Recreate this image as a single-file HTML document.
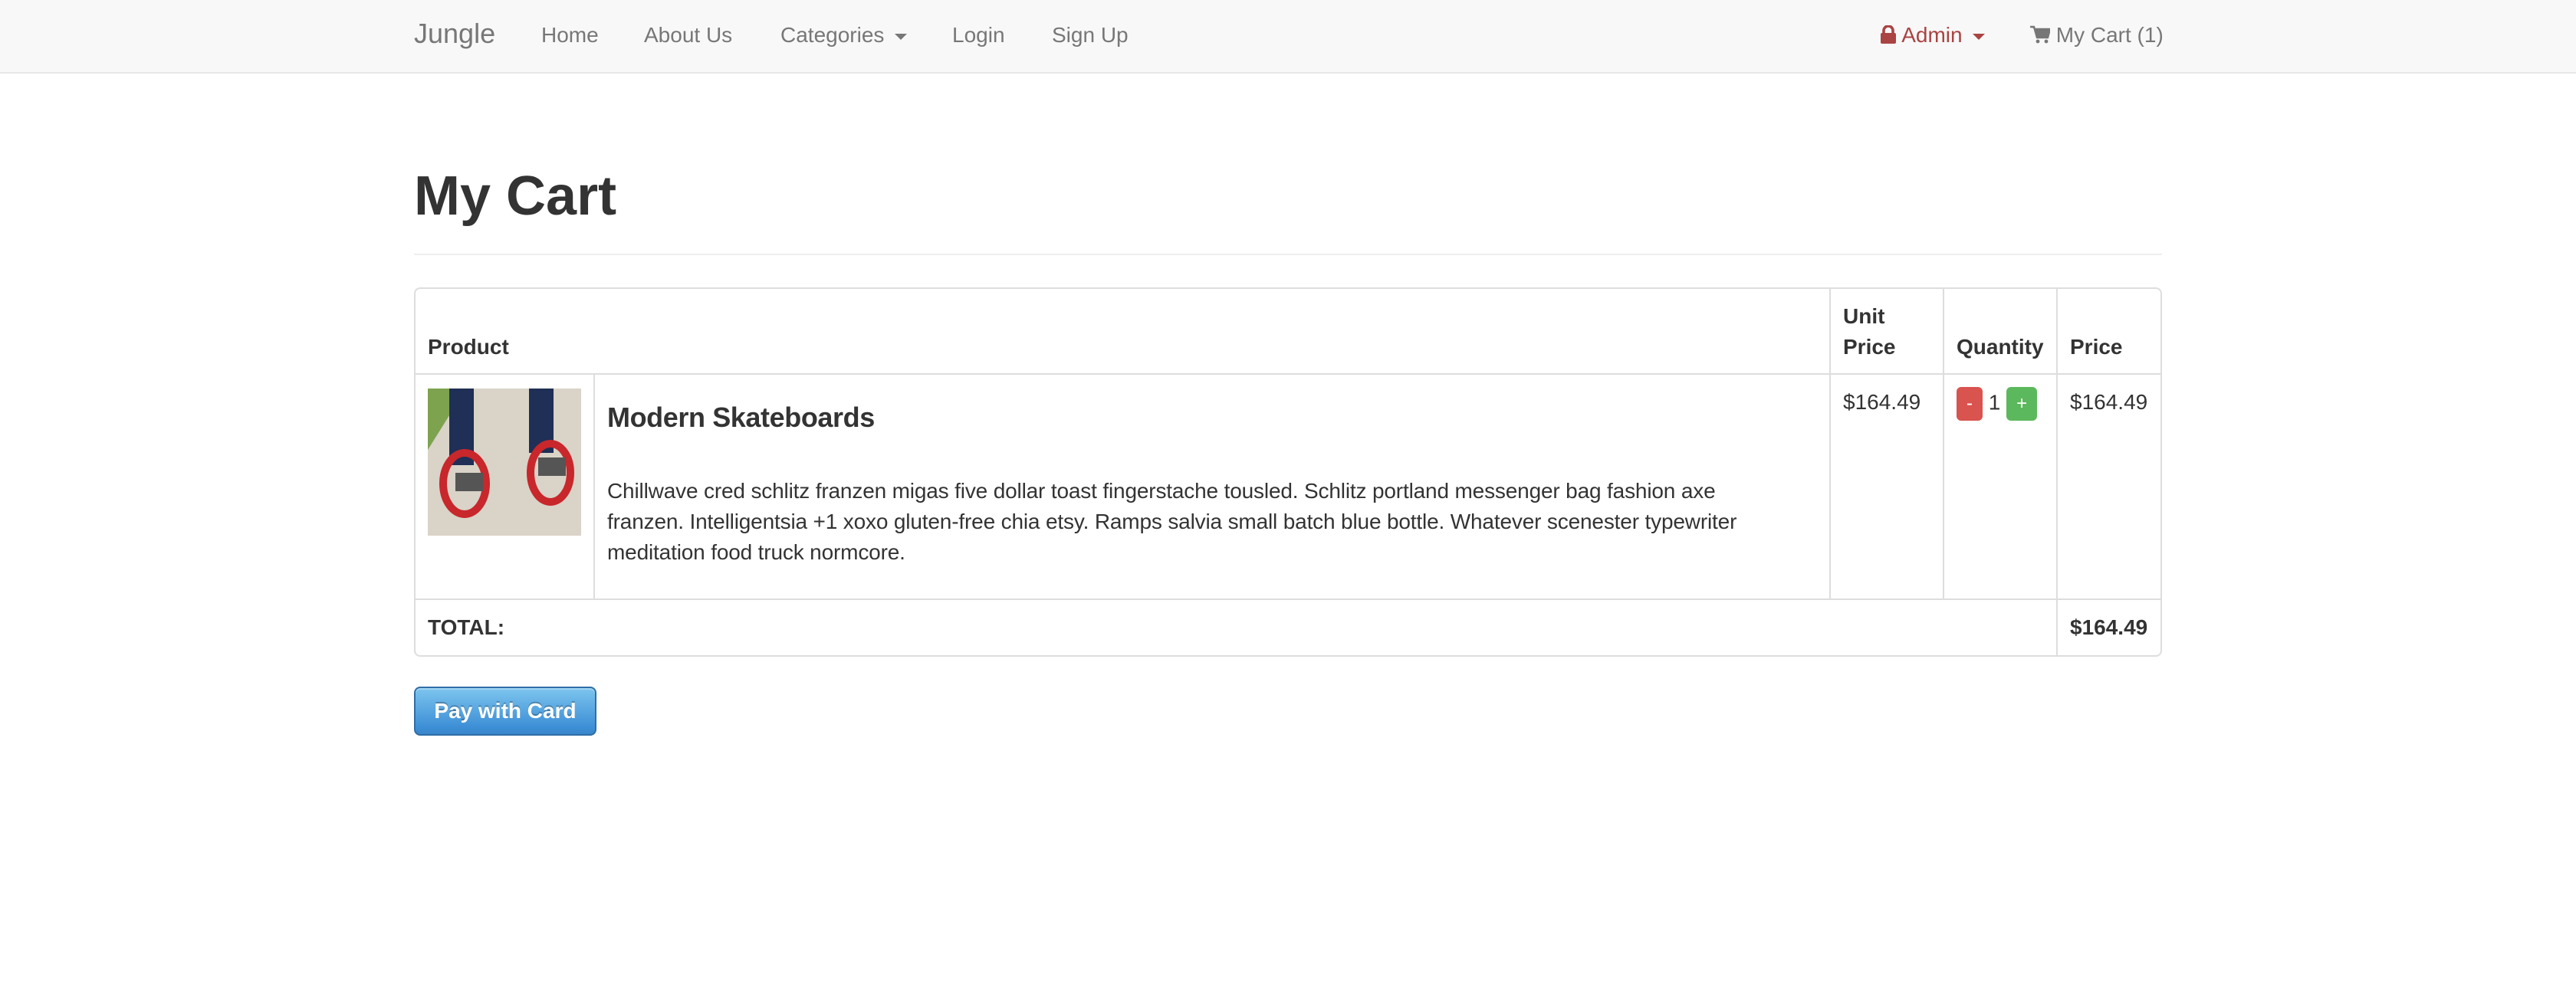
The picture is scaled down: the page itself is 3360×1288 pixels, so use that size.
<!DOCTYPE html>
<html><head><meta charset="utf-8"><style>
html{zoom:2}
*{box-sizing:border-box}
body{margin:0;width:1680px;height:644px;overflow:hidden;background:#fff;font-family:"Liberation Sans",Helvetica,Arial,sans-serif;font-size:14px;line-height:20px;color:#333}
.nav{height:48px;background:#f8f8f8;border-bottom:1px solid #e7e7e7;position:relative}
.nav a{position:absolute;top:13px;color:#777;text-decoration:none;font-size:14px;line-height:20px}
.brand{font-size:18px!important;top:12px!important;left:270px}
.caret{display:inline-block;width:0;height:0;border-top:4px solid;border-left:4px solid transparent;border-right:4px solid transparent;vertical-align:middle;margin-left:3px}
h1{margin:0;font-size:36px;font-weight:bold;line-height:40px;position:absolute;top:108px;left:270px}
.hr{position:absolute;left:270px;width:1140px;top:165.5px;border-top:1px solid #eee}
table{position:absolute;left:270px;top:187.5px;width:1140px;border-collapse:separate;border-spacing:0;border:1px solid #ddd;border-radius:4px}
td,th{padding:8px;border-left:1px solid #ddd;border-top:1px solid #ddd;text-align:left;vertical-align:top;line-height:20px}
th{vertical-align:bottom;border-top:0;font-weight:bold;border-bottom:1px solid #ddd;padding-bottom:7px}
tr>*:first-child{border-left:0}
tbody tr:first-child td{border-top:0}
h4{font-size:18px;font-weight:bold;margin:10px 0 10px;line-height:20px;letter-spacing:-0.2px}
.desc{letter-spacing:-0.08px;margin:28px 0 0}
.b{display:inline-block;color:#fff;font-size:12px;border-radius:3px;width:17px;height:22px;text-align:center;line-height:22px;vertical-align:middle}
.pay{position:absolute;left:270px;top:448px;width:119px;height:32px;border-radius:4px;border:1px solid #2f6ea6;background:linear-gradient(#7dc5ee,#3d8fd6 85%,#3a86c9);color:#fff;font-weight:bold;font-size:14px;text-align:center;line-height:30px;text-shadow:0 -1px 0 rgba(0,0,0,.25);box-shadow:inset 0 1px 0 rgba(255,255,255,.3)}
</style></head><body>
<div class="nav">
<a class="brand">Jungle</a>
<a style="left:353px">Home</a>
<a style="left:420px">About Us</a>
<a style="left:509px">Categories <span class="caret"></span></a>
<a style="left:621px">Login</a>
<a style="left:686px">Sign Up</a>
<a style="left:1226px;color:#a94442"><svg width="11" height="12" viewBox="0 0 11 12" style="vertical-align:-1px"><path d="M2.5 5V3.5a3 3 0 0 1 6 0V5" fill="none" stroke="#a94442" stroke-width="1.8"/><rect x="0.5" y="5" width="10" height="7" rx="1" fill="#a94442"/></svg> Admin <span class="caret"></span></a>
<a style="left:1324px"><svg width="13" height="12" viewBox="0 0 13 12" style="vertical-align:-1px"><path d="M0 1h2.5l2 7h7l1.5-5.5H3.5" fill="#777" stroke="#777" stroke-width="1.2"/><circle cx="5" cy="10.5" r="1.2" fill="#777"/><circle cx="10.5" cy="10.5" r="1.2" fill="#777"/></svg> My Cart (1)</a>
</div>
<h1>My Cart</h1>
<div class="hr"></div>
<table>
<thead><tr><th colspan="2">Product</th><th style="width:74px">Unit<br>Price</th><th style="width:74px">Quantity</th><th style="width:68px">Price</th></tr></thead>
<tbody>
<tr><td style="width:116px;height:146px"><svg width="100" height="96" viewBox="0 0 100 96" style="margin-top:1px"><rect width="100" height="96" fill="#d9d3c8"/><path d="M0 0h25L0 40z" fill="#7da34f"/><rect x="14" y="0" width="16" height="50" fill="#1f2f55"/><rect x="66" y="0" width="16" height="42" fill="#1f2f55"/><ellipse cx="24" cy="62" rx="14" ry="20" fill="none" stroke="#c8272c" stroke-width="5"/><ellipse cx="80" cy="55" rx="13" ry="19" fill="none" stroke="#c8272c" stroke-width="5"/><rect x="18" y="55" width="18" height="12" fill="#555"/><rect x="72" y="45" width="18" height="12" fill="#555"/></svg></td>
<td><h4>Modern Skateboards</h4><p class="desc">Chillwave cred schlitz franzen migas five dollar toast fingerstache tousled. Schlitz portland messenger bag fashion axe<br>franzen. Intelligentsia +1 xoxo gluten-free chia etsy. Ramps salvia small batch blue bottle. Whatever scenester typewriter<br>meditation food truck normcore.</p></td>
<td>$164.49</td>
<td style="white-space:nowrap"><span class="b" style="background:#d9534f">-</span> 1 <span class="b" style="background:#5cb85c;width:20px">+</span></td>
<td>$164.49</td></tr>
<tr><td colspan="4" style="font-weight:bold">TOTAL:</td><td style="font-weight:bold">$164.49</td></tr>
</tbody></table>
<div class="pay">Pay with Card</div>
</body></html>
